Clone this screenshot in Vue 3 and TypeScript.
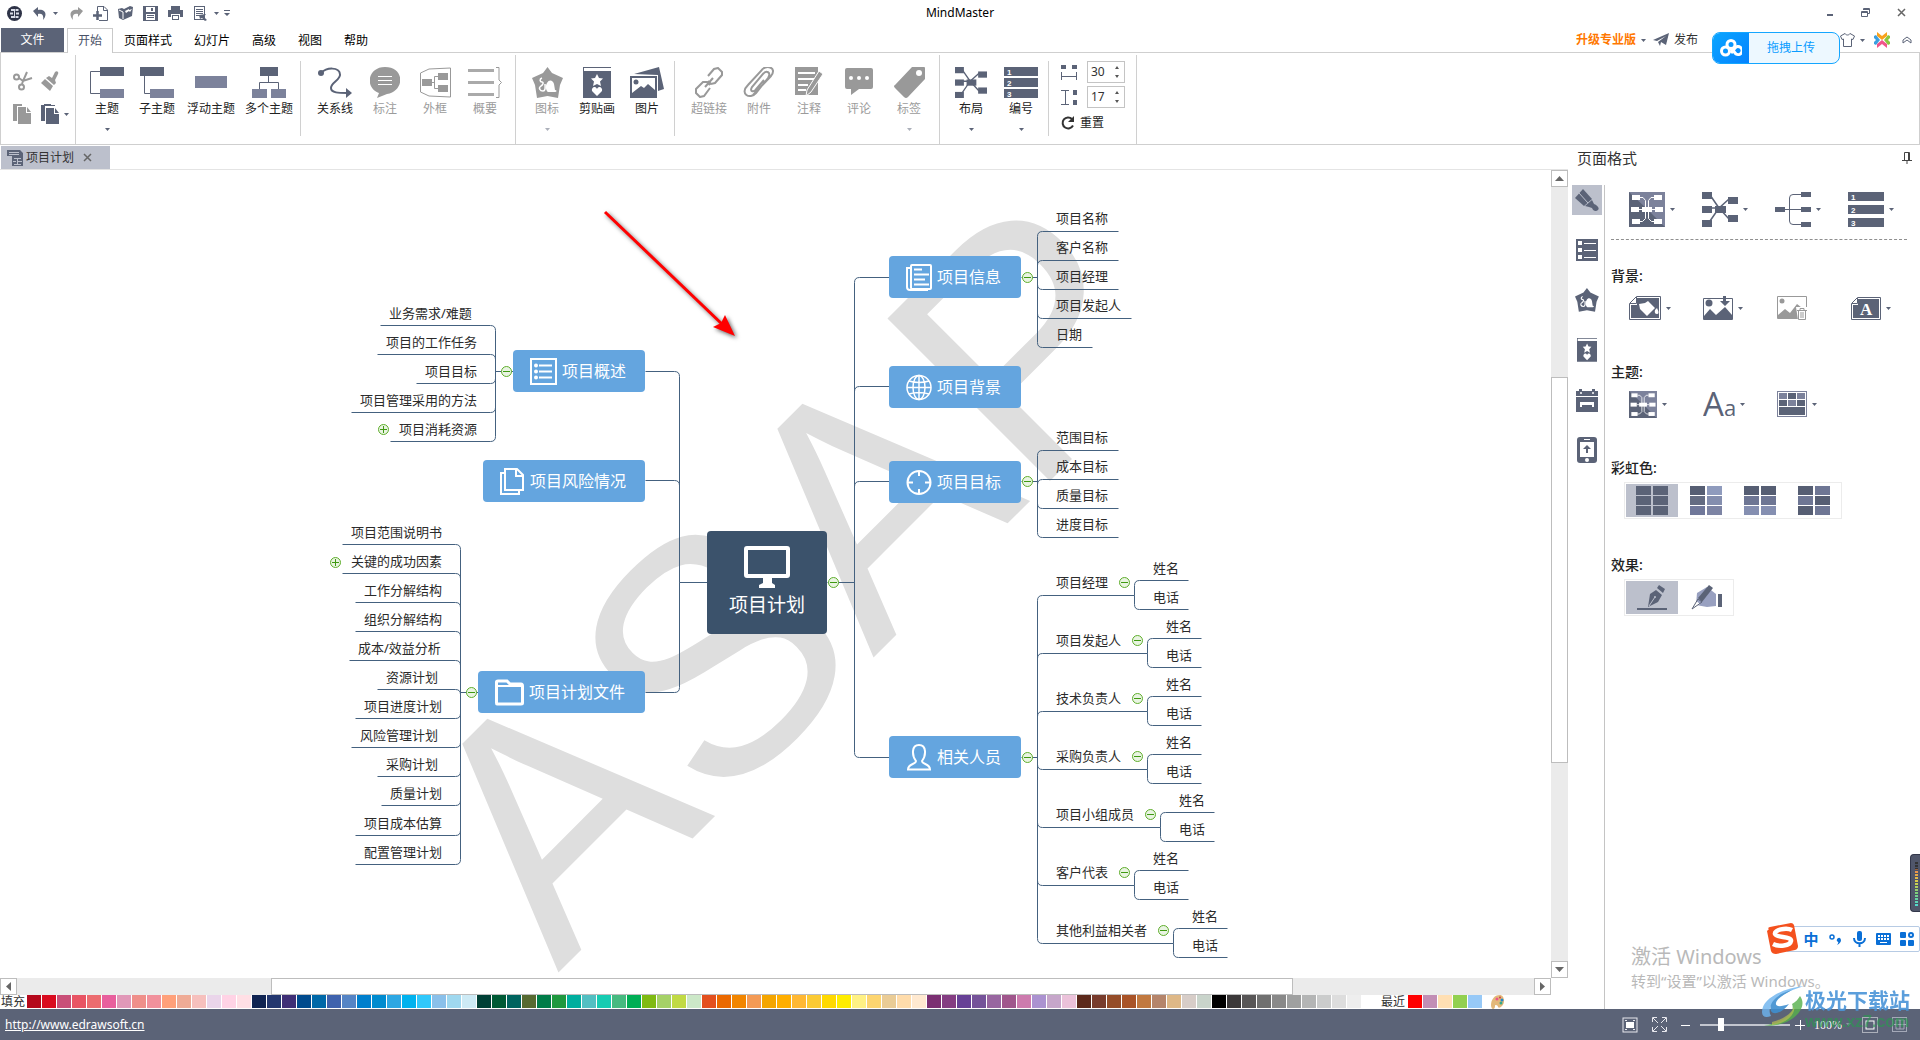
<script setup lang="ts">
import { h, ref } from 'vue'

type IconDef = [number, number, string]

const D = '#5b6377'
const M = '#7c829b'
const G = '#999999'

const star = (x: number, y: number) =>
  `<path fill="#fff" d="M${x} ${y - 6}l2 4 4 .5-3 3 1 4.500-4-2-4 2 1-4.500-3-3 4-.5z"/>`
const heart = (x: number, y: number) =>
  `<path fill="#fff" d="M${x} ${y + 5}l-5-5c-1-3 3-6 5-2 2-4 6-1 5 2z"/>`
const bars = (w: number, step: number, bh: number) =>
  [0, 1, 2]
    .map(
      (i) =>
        `<rect y="${i * step}" width="${w}" height="${bh}" fill="${D}"/><text x="3" y="${i * step + bh - 1}" font-family="Liberation Sans, sans-serif" font-size="8" font-weight="700" fill="#fff">${i + 1}</text>`,
    )
    .join('')
const spread = `<g fill="${D}"><path stroke="${D}" stroke-width="1.500" d="M8 3L17 16L27 7M8 29L17 16L27 27M6 16H16" fill="none"/><rect width="10" height="7"/><rect y="14" width="10" height="7"/><rect y="28" width="10" height="7"/><rect x="13" y="14" width="11" height="7"/><rect x="26" y="5" width="10" height="7"/><rect x="26" y="23" width="10" height="7"/></g>`
const theme = `<rect width="36" height="35" fill="${D}"/><path d="M0 0H36V35L18 17Z" fill="${M}"/><g fill="#fff"><rect x="3" y="3" width="8" height="5"/><rect x="25" y="3" width="8" height="5"/><rect x="2" y="15" width="8" height="5"/><rect x="26" y="15" width="8" height="5"/><rect x="3" y="27" width="8" height="5"/><rect x="25" y="27" width="8" height="5"/><rect x="13" y="15" width="10" height="5"/></g><path stroke="#fff" fill="none" d="M11 5.500h3l2.500 3v18l-3 3h-3M25 5.500h-3l-2.500 3v18l3 3h3M10 17.500h16"/>`
const penta = (c: string) =>
  `<path fill="${c}" d="M15.500 0L20 6L31 11L28 18L26 31L15.500 29L5 31L3 18L0 11L11 6z"/><path fill="none" stroke="#fff" stroke-width="1.500" d="M10 11c-3 1-2 4 0 4s1 3-1 4c-3 2-1 5 2 5s2-5 2-7"/><path fill="#fff" d="M15 16c2-4 6-3 7 1l1 6c2 0 2 2 0 2h-7c-2-1-3-6-1-9z"/>`
const album = `<path fill="${D}" d="M0 0H28V1H1V4H28V31H0z"/>${star(14, 13)}${heart(14, 24)}`
const grid = (c: string[]) =>
  c.map((f, i) => `<rect x="${(i % 2) * 17}" y="${Math.floor(i / 2) * 10}" width="15" height="9" fill="${f}"/>`).join('')

const icons: Record<string, IconDef> = {
  logo: [15, 15, `<circle cx="7.500" cy="7.500" r="7.500" fill="#2e3347"/><path stroke="#d8dbe6" stroke-width="2" d="M4 4h3M8.500 4h3M3 7.500h3M9 7.500h3M4 11h3M8.500 11h3"/><path stroke="#d8dbe6" d="M7.500 3v9"/>`],
  undo: [14, 13, `<path fill="${D}" d="M0 4L5 0V3C12 2 15 7 10 13C11 8 9 6 5 7V10z"/>`],
  redo: [14, 13, `<path fill="#999" d="M14 4L9 0V3C2 2 -1 7 4 13C3 8 5 6 9 7V10z"/>`],
  fresh: [15, 15, `<path fill="none" stroke="${D}" d="M4.500 6V.5H11L14.500 4V14.500H6M10.500 1V4.500H14"/><path stroke="${D}" stroke-width="2.500" d="M0 9.500h9M4.500 5v9"/>`],
  folder: [15, 14, `<path fill="${D}" d="M0 3l4-1 2 1 6-3 3 1-1 9-9 4-4-2z"/><path fill="none" stroke="#fff" d="M1 4l4 2v7"/><path fill="#fff" d="M7 5l4-2v1l3-1-2 3-1-1-3 2z"/>`],
  save: [15, 15, `<path fill="${D}" d="M0 0H15V15H0z"/><rect x="3" y="1" width="9" height="5" fill="#fff"/><rect x="8" y="2" width="2" height="3" fill="${D}"/><rect x="3" y="8" width="9" height="6" fill="#fff"/><path stroke="${D}" d="M4 9.500h7M4 11.500h7"/>`],
  print: [15, 14, `<path fill="${D}" d="M3 0h9v4H3zM0 4h15v7h-3V8H3v3H0zM4 9h7v5H4z"/><rect x="5" y="10" width="5" height="3" fill="#fff"/>`],
  preview: [13, 15, `<rect x=".5" y=".5" width="10" height="13" fill="none" stroke="${D}"/><path stroke="${D}" d="M2 3.500h7M2 5.500h7M2 7.500h7M2 9.500h4"/><path fill="${D}" d="M5 9l7-1-2 3 3 3-2 1-3-3-2 1z"/>`],
  more: [6, 7, `<path fill="${D}" d="M0 0h6v1H0zM0 3h6L3 6z"/>`],
  caret: [5, 3, `<path fill="${D}" d="M0 0h5L2.500 3z"/>`],
  min: [9, 9, `<path stroke="${D}" stroke-width="2" d="M2 7h6"/>`],
  restore: [9, 9, `<path fill="none" stroke="${D}" d="M2.500 2V.5H8.500V5.500H7M.5 3.500H6.500V8.500H.5zM.5 4.500h6M2 1.500h6"/>`],
  close: [9, 9, `<path stroke="#666" stroke-width="1.500" d="M1 1l7 7M8 1L1 8"/>`],
  plane: [17, 14, `<path fill="${D}" d="M0 7L16 0L13 12L8 9L7 13L5 9L13 3L4 8z"/>`],
  shirt: [15, 14, `<path fill="none" stroke="${D}" d="M5 .5L.5 3L2 6.500L3.500 6V13.500H11.500V6L13 6.500L14.500 3L10 .5C9 2.500 6 2.500 5 .5z"/>`],
  cross: [16, 16, `<path fill="#f9a11b" d="M3 0l5 4 5-4v4L8 8 3 4z"/><path fill="#8cc63f" d="M16 4v2l-2 2 2 2v2l-2 1-4-5 4-5z"/><path fill="#f0558a" d="M3 16l5-4 5 4v-4L8 8l-5 4z"/><path fill="#3b9fe0" d="M0 4v2l2 2-2 2v2l2 1 4-5-4-5z"/>`],
  chev: [10, 8, `<path fill="none" stroke="${D}" d="M1 7L1 4L5 1L9 4V7L5 4z"/>`],
  cloud: [22, 18, `<g fill="none" stroke="#fff" stroke-width="3"><circle cx="11" cy="5.500" r="4"/><circle cx="5.500" cy="12" r="4"/><path d="M11 9l5 6a4 4 0 1 0 -1-6l-4 5"/></g>`],
  cut: [20, 20, `<g fill="none" stroke="${G}" stroke-width="2"><circle cx="3.500" cy="6" r="2.500"/><circle cx="8.500" cy="16" r="2.500"/><path d="M6 7l4 3 9-3M9 13l1-3 4-9"/></g>`],
  brush: [18, 20, `<path fill="${G}" d="M14 1c2-2 4 0 3 2l-3 6 1 3-2 2-8-7 3-2 3 2zM4 8l8 7-3 5-9-8z"/>`],
  copy: [19, 20, `<path fill="${G}" d="M0 0h9v2H4v15H0zM5 3h8v6h5v11H5zM14 3l4 5h-4z"/>`],
  paste: [19, 20, `<path fill="${D}" d="M0 1h3V0h7v1h4v1H4v15H0zM5 4h8v6h5v10H5zM14 4l4 5h-4z"/>`],
  topic: [34, 31, `<path fill="none" stroke="${D}" d="M10 4.500H.5V26.500H10"/><rect x="10" width="24" height="9" fill="${D}"/><rect x="10" y="22" width="24" height="9" fill="${M}"/>`],
  sub: [34, 31, `<path fill="none" stroke="${D}" d="M4.500 9V26.500H10"/><rect width="24" height="9" fill="${D}"/><rect x="10" y="22" width="24" height="9" fill="${M}"/>`],
  float: [32, 31, `<rect y="9" width="32" height="12" fill="${M}"/>`],
  multi: [34, 31, `<path fill="none" stroke="${D}" d="M16.500 9V15.500M7.500 22V15.500H26.500V22"/><rect x="8" width="18" height="9" fill="${D}"/><rect y="22" width="15" height="9" fill="${M}"/><rect x="19" y="22" width="15" height="9" fill="${M}"/>`],
  relation: [34, 31, `<circle cx="3" cy="6" r="3" fill="${D}"/><path fill="none" stroke="${D}" stroke-width="2" d="M3 6C9 0 21 0 22 7C23 13 13 15 13 21C13 26 21 26 29 26"/><path fill="${D}" d="M28 21l6 5-6 5z"/>`],
  callout: [30, 31, `<path fill="${G}" d="M15 0C35 0 35 24 17 27L7 31L9 26C-6 20 -2 0 15 0z"/><path stroke="#fff" d="M8 9.500h14M8 13.500h14M8 17.500h14"/>`],
  bound: [31, 31, `<path fill="none" stroke="${G}" d="M.5 6L9 2L30.500 1V30L9 29L.5 25z"/><g fill="${G}"><rect x="2" y="12" width="10" height="7"/><rect x="18" y="6" width="10" height="7"/><rect x="18" y="18" width="10" height="7"/></g><path fill="none" stroke="${G}" d="M12 15.500h3M18 9.500h-3.500v12H18"/>`],
  summary: [34, 31, `<path stroke="#aaa" stroke-width="3" d="M0 3.500h26M0 15.500h26M0 27.500h26"/><path fill="none" stroke="${G}" d="M28 .5H31V13L33.500 15.500L31 18V30.500H28"/>`],
  mark: [31, 31, penta(G)],
  album: [28, 31, album],
  picture: [34, 31, `<path fill="${D}" d="M4 7L29 0L34 22L28 24V8z"/><path fill="${D}" d="M0 9h27v22H0z"/><path fill="#fff" d="M2 11h23v12l-7-6-4 4-3-2-9 7z"/><circle cx="6" cy="15" r="2.500" fill="${D}"/>`],
  link: [30, 31, `<g fill="none" stroke="${G}" stroke-width="2"><path d="M14 9l6-7 4-1 4 4v3l-7 8-4 1-3-3M16 21l-6 8-4 1-4-4v-4l7-7h4l3 3"/><path d="M11 20l8-9"/></g>`],
  clip: [32, 31, `<path fill="none" stroke="${G}" stroke-width="2" d="M10 28L28 9C35 0 22-3 18 4L5 18C-4 27 7 33 13 26L25 11C29 5 23 3 20 7L9 20C6 25 11 26 14 21L21 13"/>`],
  note: [30, 31, `<path fill="${G}" d="M1 0H24V28H1z"/><path stroke="#fff" stroke-width="2" d="M4 6h17M4 12h17M4 18h10M4 23h8"/><path fill="${G}" stroke="#fff" d="M25 4l4 3-12 18-5 4 1-6z"/>`],
  comment: [28, 31, `<path fill="${G}" d="M2 1H26Q28 1 28 3V20Q28 22 26 22H14L6 28V22H2Q0 22 0 20V3Q0 1 2 1z"/><g fill="#fff"><circle cx="6" cy="11" r="2"/><circle cx="14" cy="11" r="2"/><circle cx="22" cy="11" r="2"/></g>`],
  tag: [31, 31, `<path fill="${G}" d="M18 0H30Q31 0 31 1V12L14 30Q12 32 10 30L1 21Q-1 19 1 18z"/><circle cx="25" cy="6" r="3" fill="#fff"/>`],
  layout: [32, 31, `<g transform="scale(.89)">${spread}</g>`],
  number: [34, 31, bars(34, 11, 9)],
  gapH: [16, 15, `<path fill="${D}" d="M0 0h5v4H0zM11 0h5v4h-5z"/><path fill="none" stroke="${D}" d="M.5 7v8M15.500 7v8M1 11.500h14"/>`],
  gapV: [16, 15, `<path fill="${D}" d="M12 0h4v5h-4zM12 10h4v5h-4z"/><path fill="none" stroke="${D}" d="M0 .5h8M4.500 1v13M0 14.500h8"/>`],
  reset: [14, 14, `<path fill="none" stroke="#333" stroke-width="2" d="M12 9.500A5.500 5.500 0 1 1 11 3"/><path fill="#333" d="M13 0v6H7z"/>`],
  doc: [16, 16, `<path fill="${D}" d="M0 0h13l3 3v13H5V6H0z"/><path stroke="#bcc0cc" d="M2 2.500h10M2 4.500h10M7 8.500h3M11 8.500h3M6 11.500h3M11 11.500h4M7 14.500h3M11 14.500h3M10.500 8v7"/>`],
  pin: [10, 12, `<path fill="none" stroke="#444" d="M2.500 8V.5H7.500V8M0 8.500h10M5 9v3"/><path stroke="#444" d="M6.500 1v7"/>`],
  paint: [24, 23, `<path fill="${D}" d="M0 9L8 0L17 10L9 17z"/><path fill="${D}" d="M10 17L17 11L19 15C22 16 25 19 23 21S18 22 17 19L14 18z"/><path stroke="#bcc0cc" d="M4 4l9 10"/>`],
  list: [22, 22, `<rect width="22" height="22" fill="${D}"/><g fill="#fff"><rect x="2" y="2" width="4" height="4"/><rect x="2" y="9" width="4" height="4"/><rect x="2" y="16" width="4" height="4"/><rect x="8" y="4" width="12" height="1"/><rect x="8" y="11" width="12" height="1"/><rect x="8" y="18" width="12" height="1"/></g>`],
  mark2: [24, 24, `<g transform="scale(.77)">${penta(D)}</g>`],
  album2: [20, 24, `<g transform="scale(.72 .77)">${album}</g>`],
  calendar: [22, 23, `<path fill="${D}" d="M0 2h22v5H0zM0 8h22v15H0zM3 0h3v3H3zM16 0h3v3h-3z"/><circle cx="5" cy="4" r="1" fill="#fff"/><circle cx="17" cy="4" r="1" fill="#fff"/><path fill="#fff" d="M4 13h14v5h-2v-2H6v2H4z"/>`],
  phone: [20, 26, `<rect width="20" height="26" rx="3" fill="${D}"/><rect x="3" y="5" width="14" height="15" fill="#fff"/><circle cx="10" cy="23" r="2" fill="#fff"/><path stroke="#fff" d="M7 2.500h6"/><path fill="${D}" d="M10 8l4 4h-3v4H9v-4H6z"/>`],
  theme: [36, 35, theme],
  theme2: [28, 27, `<g transform="scale(.78)">${theme}</g>`],
  spread: [36, 35, spread],
  branch: [36, 35, `<g fill="${D}"><rect y="15" width="10" height="5"/><rect x="26" width="10" height="5"/><rect x="26" y="15" width="10" height="5"/><rect x="26" y="30" width="10" height="5"/></g><path fill="none" stroke="${D}" d="M10 17.500H26M26 2.500H18Q14.500 2.500 14.500 6V29Q14.500 32.500 18 32.500H26"/>`],
  number2: [36, 35, bars(36, 13, 9)],
  bgFill: [32, 24, `<path fill="none" stroke="${D}" d="M7.500 .5H31.500V23.500H.5V7.500z"/><path fill="${D}" d="M8 2H30V22H2V9H8z"/><path fill="none" stroke="${D}" d="M7.500 1V7.500H1"/><path fill="#fff" d="M10 8l6-1 3-2 7 7-8 8-7-7zM28 12q3 6 0 6t-2-4z"/>`],
  bgPic: [30, 24, `<path fill="none" stroke="${D}" d="M.5 2.500H29.500V23.500H.5z"/><path fill="${D}" d="M1 23V20L7 13L13 19L22 11L29 19V23z"/><circle cx="6" cy="7" r="3.500" fill="${D}"/><path fill="${D}" d="M20 0h3v5h4l-5 5-5-5h3z"/>`],
  bgDel: [30, 24, `<path fill="none" stroke="${G}" d="M.5 .5H29.500V22.500H.5z"/><path fill="${G}" d="M1 22V19L8 13L13 17L20 8L29 15V22z"/><circle cx="5" cy="5" r="2.500" fill="${G}"/><path fill="#fff" d="M19 11h11v13H21z"/><path fill="none" stroke="${G}" d="M20 14.500h10M23 14v-1.500h4V14M21.500 15v8.500h7V15M24 16v6M26 16v6"/>`],
  bgText: [30, 23, `<path fill="none" stroke="${D}" d="M6.500 .5H29.500V22.500H.5V6.500z"/><path fill="${D}" d="M7 2H28V21H2V8H7z"/><path fill="none" stroke="${D}" d="M6.500 1V6.500H1"/><text x="9" y="18" font-family="Liberation Serif, serif" font-weight="700" font-size="17" fill="#fff">A</text>`],
  fonts: [32, 28, `<text x="0" y="26" font-family="Open Sans, sans-serif" font-size="33" fill="${D}">A<tspan font-size="22">a</tspan></text>`],
  table: [30, 26, `<rect x=".5" y=".5" width="29" height="25" fill="none" stroke="${M}"/><g fill="${M}"><rect x="2" y="2" width="8" height="6"/><rect x="20" y="2" width="8" height="6"/><rect x="11" y="9" width="8" height="6"/></g><g fill="${D}"><rect x="11" y="2" width="8" height="6"/><rect x="2" y="9" width="8" height="6"/><rect x="20" y="9" width="8" height="6"/><rect x="2" y="16" width="26" height="8"/></g>`],
  rain1: [32, 29, grid([D, D, D, D, D, D])],
  rain2: [32, 29, grid(['#565e73', '#8f9bbd', '#646c82', '#848eae', '#70789a', '#7d84a4'])],
  rain3: [32, 29, grid(['#565e73', '#565e73', '#6e7694', '#6e7694', '#858fb1', '#858fb1'])],
  rain4: [32, 29, grid(['#565e73', '#6e7694', '#6e7694', '#565e73', '#565e73', '#6e7694'])],
  pen: [30, 25, `<path stroke="${D}" stroke-width="2" d="M0 24h30"/><path fill="${D}" d="M11 22L13 9L19 5L25 10L21 17zM20 3L22 0L28 4L26 8z"/><path stroke="#bcc0cc" d="M12 21L18 12"/><circle cx="18" cy="12" r="1" fill="#bcc0cc"/>`],
  hand: [31, 25, `<path fill="#98a0c0" d="M5 20L6 8L16 2L25 9V21L16 22z"/><path fill="#fff" d="M1 24L4 15L9 19z"/><path fill="${D}" d="M7 13L18 0L22 3L11 17z"/><path stroke="${D}" fill="none" d="M1 24L7 14L11 17L1 24"/><rect x="27" y="9" width="4" height="13" fill="${D}"/>`],
  nInfo: [26, 27, `<g fill="none" stroke="#fff" stroke-width="2"><rect x="5" y="1" width="20" height="24" rx="1"/><path d="M5 4H1V23Q1 26 4 26H22M8 5.500h8M8 10.500h15M8 15.500h11M8 20.500h15"/></g>`],
  nGlobe: [26, 27, `<g fill="none" stroke="#fff" stroke-width="1.500"><circle cx="13" cy="13.500" r="12"/><ellipse cx="13" cy="13.500" rx="6" ry="12"/><path d="M13 1V26M1 13.500H25M3 7Q13 10 23 7M3 20Q13 17 23 20"/></g>`],
  nTarget: [26, 27, `<circle cx="13" cy="13.500" r="11.500" fill="none" stroke="#fff" stroke-width="2"/><path stroke="#fff" stroke-width="2" d="M13 2V7M13 20V25M2 13.500H7M19 13.500H24"/>`],
  nUser: [26, 27, `<path fill="none" stroke="#fff" stroke-width="2" d="M10 17C6 12 5 1 13 1S20 12 16 17C16 21 24 19 24 25.500H2C2 19 10 21 10 17z"/>`],
  nList: [27, 27, `<rect x="1" y="1" width="25" height="25" fill="none" stroke="#fff" stroke-width="2"/><path stroke="#fff" stroke-width="2" d="M9 7.500h13M9 13.500h13M9 19.500h13"/><g fill="#fff"><circle cx="6" cy="7.500" r="2"/><circle cx="6" cy="13.500" r="2"/><circle cx="6" cy="19.500" r="2"/></g>`],
  nDocs: [25, 27, `<g fill="none" stroke="#fff" stroke-width="2"><path d="M5 1H17L23 7V22H5zM16 1V8H23M5 5H1V26H19V22"/></g>`],
  nFolder: [29, 27, `<path fill="none" stroke="#fff" stroke-width="3" d="M2 25Q1.500 25 1.500 24V3Q1.500 2 3 2H12L15 5H26Q27.500 5 27.500 7V24Q27.500 25 26 25z"/><path stroke="#fff" stroke-width="2" d="M2 7h25"/>`],
  monitor: [46, 42, `<rect x="2" y="2" width="42" height="28" rx="1" fill="none" stroke="#fff" stroke-width="4"/><path fill="#fff" d="M19 32h9v5l3 2v3H15v-3l4-2z"/>`],
  palette: [14, 14, `<path fill="#e3b87a" d="M9 0C3 0 0 5 0 10c0 5 4 5 4 1 0-2 3-1 3 1 1 2 6-1 6-6 0-4-2-6-4-6z"/><circle cx="6" cy="4" r="1.500" fill="#e58"/><circle cx="9" cy="2.500" r="1" fill="#c44"/><circle cx="11" cy="5" r="1.500" fill="#28c"/><circle cx="10" cy="8" r="1.500" fill="#3a8"/>`],
  fit: [16, 16, `<rect x="1" y="1" width="14" height="14" fill="none" stroke="#e8e8ee"/><rect x="4" y="5" width="8" height="6" fill="#fff"/><path stroke="#e8e8ee" d="M3 3.500h2M11 3.500h2M3 12.500h2M11 12.500h2"/>`],
  full: [15, 15, `<path fill="none" stroke="#e8e8ee" d="M.5 5V.5H5M10 .5h4.500V5M.5 10v4.500H5M10 14.500h4.500V10M1 1l5 5M14 1L9 6M1 14l5-5M14 14L9 9"/>`],
  minus: [10, 10, `<path stroke="#fff" d="M0 5.500h9"/>`],
  plus: [10, 10, `<path stroke="#fff" d="M0 5.500h10M5.500 0v10"/>`],
  caretW: [5, 3, `<path fill="#8d94a5" d="M0 0h5L2.500 3z"/>`],
  page: [16, 16, `<rect x=".5" y=".5" width="15" height="15" fill="none" stroke="#fff" stroke-dasharray="1 1"/><rect x="4" y="4" width="8" height="8" fill="none" stroke="#fff"/>`],
  pages: [16, 16, `<rect x=".5" y=".5" width="14" height="14" fill="none" stroke="#a4a9b8"/><path fill="none" stroke="#a4a9b8" d="M4 3h8v9H4zM8 3v9M2 7.500h12"/>`],
  sogou: [32, 32, `<path fill="#f4511e" d="M3 6Q1 5 4 4L25 0Q27 0 28 2L32 23Q32 26 29 27L10 31Q6 31 5 28L1 8z"/><path fill="none" stroke="#fff" stroke-width="4.500" d="M26 7C20 4 8 7 9 11S26 13 25 18 13 24 7 21"/>`],
  comma: [13, 12, `<circle cx="3" cy="4" r="2" fill="none" stroke="#0a6fd6" stroke-width="1.500"/><path fill="#0a6fd6" d="M8 6q3-3 4 1 0 3-4 5 2-3 1-3-2-1-1-3z"/>`],
  mic: [13, 16, `<rect x="4" width="5" height="10" rx="2" fill="#0a6fd6"/><path fill="none" stroke="#0a6fd6" stroke-width="2" d="M1 7C1 14 12 14 12 7M6.500 12v4"/>`],
  keys: [15, 12, `<rect width="15" height="12" rx="1" fill="#0a6fd6"/><path stroke="#fff" stroke-width="2" stroke-dasharray="2 1" d="M2 3h11M2 6h11"/><path stroke="#fff" d="M4 9.500h7"/>`],
  apps: [14, 14, `<g fill="#0a6fd6"><rect width="6" height="6" rx="1"/><rect y="8" width="6" height="6" rx="1"/><rect x="8" y="8" width="6" height="6" rx="1"/></g><circle cx="11" cy="3" r="2" fill="none" stroke="#0a6fd6" stroke-width="2"/>`],
  up: [9, 5, `<path fill="#666" d="M0 5h9L4.500 0z"/>`],
  down: [9, 5, `<path fill="#666" d="M0 0h9L4.500 5z"/>`],
  left: [5, 9, `<path fill="#666" d="M5 0v9L0 4.500z"/>`],
  right: [5, 9, `<path fill="#666" d="M0 0v9L5 4.500z"/>`],
  swirl: [44, 40, `<path fill="#6db4ee" fill-opacity=".9" d="M42 0C22 2 0 12 0 26c0 5 4 6 9 4C2 18 22 6 42 0z"/><path fill="#3f8fd0" d="M30 4C14 8 6 18 9 25c3 5 12 1 18-7-8 3-14 3-13-1 1-5 9-9 16-13z"/><path fill="#56b04c" fill-opacity=".9" d="M38 10c8 10-4 26-24 29-4 1-8 1-12 0 18-1 32-12 28-21 4-2 6-5 8-8z"/><path fill="#c3c84e" fill-opacity=".7" d="M10 36c12-3 20-9 22-15 2 7-8 17-22 18z"/>`],
}

const Icon = (p: { n: string }) => {
  const [w, ht, body] = icons[p.n]
  return h('svg', { width: w, height: ht, viewBox: `0 0 ${w} ${ht}`, 'aria-hidden': 'true', innerHTML: body })
}
Icon.props = ['n']

interface Tool { t: string; i: string; off?: boolean; menu?: boolean; wide?: boolean }
const groups: { end: string; tools: Tool[] }[] = [
  { end: 'short', tools: [
    { t: '主题', i: 'topic', menu: true }, { t: '子主题', i: 'sub' },
    { t: '浮动主题', i: 'float', wide: true }, { t: '多个主题', i: 'multi', wide: true }] },
  { end: 'long', tools: [
    { t: '关系线', i: 'relation' }, { t: '标注', i: 'callout', off: true },
    { t: '外框', i: 'bound', off: true }, { t: '概要', i: 'summary', off: true }] },
  { end: 'short', tools: [
    { t: '图标', i: 'mark', off: true, menu: true }, { t: '剪贴画', i: 'album' }, { t: '图片', i: 'picture' }] },
  { end: 'long', tools: [
    { t: '超链接', i: 'link', off: true }, { t: '附件', i: 'clip', off: true }, { t: '注释', i: 'note', off: true },
    { t: '评论', i: 'comment', off: true }, { t: '标签', i: 'tag', off: true, menu: true }] },
  { end: 'short', tools: [{ t: '布局', i: 'layout', menu: true }, { t: '编号', i: 'number', menu: true }] },
]
const tabs = ['开始', '页面样式', '幻灯片', '高级', '视图', '帮助']
const sideTabs = ['paint', 'list', 'mark2', 'album2', 'calendar', 'phone']
const gapX = ref(30)
const gapY = ref(17)
const zoom = ref(22)

const swatches = (
  'b5081b d90b1f c94f78 e85464 ec6c70 e85f9d e198b8 ef8f8a f1919c ffa07a efab96 f6c0bd ead5ea ffd3e5 ffdfe5 ' +
  '102452 23376f 3f2f76 004a8d 0068a8 3f62ad 5584c5 007fcd 008bcf 2da7e3 00b2ee 30c8fb 8ac0ea 9fd8ef cdeaf5 ' +
  '004036 005a35 00645f 576a31 007c48 1f983f 00ae9e 52bfc2 17ccb2 46ba80 00ae55 7fba12 a5d167 c1da44 cce8c8 ' +
  'e3501f eb6900 f18500 f39a55 f4a500 ffae00 ffb833 fbca34 ffd900 ffed00 fff184 fdd570 eacc96 ffdcab ffe9d0 ' +
  '7b2f72 843d82 674196 755399 9866a0 a0568c cd7bae ab92d0 c6a6ca ebc2da 5c291b 783c2d 954d29 a95428 c17940 ' +
  'b5856b deb887 d7cdc8 c9d4cb 000000 3b3839 585657 707070 898989 9fa0a0 b4b5b5 cbcccc dddddd eeeeee'
).split(' ')
const recent = ['ff0000', 'c28eb5', 'ffdfb3', '92d050', '97c9f7']

/* Mind map, in canvas coordinates. */
interface Box { t: string; i: string; x: number; y: number; w: number }
const boxes: Box[] = [
  { t: '项目信息', i: 'nInfo', x: 889, y: 86, w: 132 },
  { t: '项目背景', i: 'nGlobe', x: 889, y: 196, w: 132 },
  { t: '项目目标', i: 'nTarget', x: 889, y: 291, w: 132 },
  { t: '相关人员', i: 'nUser', x: 889, y: 566, w: 132 },
  { t: '项目概述', i: 'nList', x: 513, y: 180, w: 132 },
  { t: '项目风险情况', i: 'nDocs', x: 483, y: 290, w: 162 },
  { t: '项目计划文件', i: 'nFolder', x: 478, y: 501, w: 167 },
]
interface Leaf { t: string; x: number; y: number }
const leaves: Leaf[] = []
const paths: string[] = []
const toggles: { x: number; y: number; plus: boolean }[] = []

function arm(spine: number, from: number, y: number, end: number) {
  const dx = end > spine ? 5 : -5
  const dy = y < from ? 5 : -5
  paths.push(`M${spine} ${from}V${y + dy}Q${spine} ${y} ${spine + dx} ${y}H${end}`)
}

const leftLists: [number, number, [string, number, number][]][] = [
  [495, 201, [['业务需求/难题', 380, 155], ['项目的工作任务', 377, 184], ['项目目标', 416, 213], ['项目管理采用的方法', 351, 242], ['项目消耗资源', 390, 271]]],
  [460, 522, [['项目范围说明书', 342, 374], ['关键的成功因素', 342, 403], ['工作分解结构', 355, 432], ['组织分解结构', 355, 461],
    ['成本/效益分析', 349, 490], ['资源计划', 377, 519], ['项目进度计划', 355, 548], ['风险管理计划', 351, 577],
    ['采购计划', 377, 606], ['质量计划', 381, 635], ['项目成本估算', 355, 665], ['配置管理计划', 355, 694]]],
]
for (const [spine, mid, items] of leftLists) {
  for (const [t, x, y] of items) {
    leaves.push({ t, x: x + 9, y })
    arm(spine, mid, y, x)
  }
  paths.push(`M${spine} ${mid}H${spine + 18}`)
  toggles.push({ x: spine + 11, y: mid, plus: false })
}
toggles.push({ x: 383, y: 259, plus: true }, { x: 335, y: 392, plus: true })

const rightLists: [number, [string, number, number][]][] = [
  [107, [['项目名称', 1118, 61], ['客户名称', 1118, 90], ['项目经理', 1118, 119], ['项目发起人', 1131, 148], ['日期', 1092, 177]]],
  [311, [['范围目标', 1118, 280], ['成本目标', 1118, 309], ['质量目标', 1118, 338], ['进度目标', 1118, 367]]],
  [587, [['项目经理', 1134, 425], ['项目发起人', 1147, 483], ['技术负责人', 1147, 541], ['采购负责人', 1147, 599],
    ['项目小组成员', 1160, 657], ['客户代表', 1134, 715], ['其他利益相关者', 1173, 773]]],
]
for (const [mid, items] of rightLists) {
  for (const [t, end, y] of items) {
    leaves.push({ t, x: 1056, y: y - 1 })
    arm(1037, mid, y, end)
    if (mid === 587) {
      arm(end, y, y - 15, end + 54)
      arm(end, y, y + 14, end + 54)
      leaves.push({ t: '姓名', x: end + 19, y: y - 15 }, { t: '电话', x: end + 19, y: y + 14 })
      toggles.push({ x: end - 10, y: y - 13, plus: false })
    }
  }
  paths.push(`M1021 ${mid}H1037`)
  toggles.push({ x: 1027, y: mid, plus: false })
}
for (const y of [107, 216, 311, 587]) arm(854, 412, y, 889)
for (const y of [201, 310, 522]) arm(679, 412, y, 645)
paths.push('M679 412H707', 'M827 412H854')
toggles.push({ x: 833, y: 412, plus: false })

const at = (x: number, y: number) => ({ left: x + 'px', top: y + 'px' })
</script>

<template>
  <div class="app">
    <header class="title">
      <div class="quick">
        <button aria-label="MindMaster"><Icon n="logo" /></button>
        <button aria-label="撤销"><Icon n="undo" /></button>
        <button class="drop" aria-label="撤销列表"><Icon n="caret" /></button>
        <button aria-label="重做"><Icon n="redo" /></button>
        <button aria-label="新建"><Icon n="fresh" /></button>
        <button aria-label="打开"><Icon n="folder" /></button>
        <button aria-label="保存"><Icon n="save" /></button>
        <button aria-label="打印"><Icon n="print" /></button>
        <button aria-label="预览"><Icon n="preview" /></button>
        <button class="drop" aria-label="预览选项"><Icon n="caret" /></button>
        <button class="drop" aria-label="更多"><Icon n="more" /></button>
      </div>
      <h1>MindMaster</h1>
      <div class="win">
        <button aria-label="最小化"><Icon n="min" /></button>
        <button aria-label="还原"><Icon n="restore" /></button>
        <button aria-label="关闭"><Icon n="close" /></button>
      </div>
    </header>

    <nav class="menu">
      <button class="file">文件</button>
      <button v-for="(t, i) in tabs" :key="t" class="tab" :class="{ on: i === 0 }">{{ t }}</button>
      <div class="account">
        <button class="upgrade">升级专业版 <Icon n="caret" /></button>
        <button class="publish"><Icon n="plane" />发布</button>
        <button class="shirt" aria-label="皮肤"><Icon n="shirt" /><Icon n="caret" /></button>
        <button class="plain" aria-label="应用"><Icon n="cross" /></button>
        <button class="plain" aria-label="折叠"><Icon n="chev" /></button>
      </div>
      <button class="upload"><span class="cloud"><Icon n="cloud" /></span><span class="drag">拖拽上传</span></button>
    </nav>

    <section class="ribbon">
      <div class="clipboard">
        <button aria-label="剪切"><Icon n="cut" /></button>
        <button aria-label="格式刷"><Icon n="brush" /></button>
        <button aria-label="复制"><Icon n="copy" /></button>
        <button aria-label="粘贴"><Icon n="paste" /><Icon n="caret" /></button>
      </div>
      <div v-for="(g, gi) in groups" :key="gi" class="group" :class="[g.end, 'g' + gi]">
        <button v-for="b in g.tools" :key="b.t" class="tool" :class="{ off: b.off, wide: b.wide }">
          <Icon :n="b.i" /><span>{{ b.t }}</span><Icon v-if="b.menu" n="caret" />
        </button>
      </div>
      <div class="spacing">
        <label><Icon n="gapH" /><span class="spin"><input v-model.number="gapX" type="text" aria-label="水平间距" /><i></i></span></label>
        <label><Icon n="gapV" /><span class="spin"><input v-model.number="gapY" type="text" aria-label="垂直间距" /><i></i></span></label>
        <button class="reset"><Icon n="reset" />重置</button>
      </div>
    </section>

    <main class="body">
      <div class="work">
        <div class="docs">
          <div class="doc"><Icon n="doc" /><span>项目计划</span><button aria-label="关闭文档"><Icon n="close" /></button></div>
        </div>
        <div class="view">
          <div class="canvas">
            <svg class="links">
              <text class="mark" transform="translate(558 803) rotate(-45)">ASAP</text>
              <g transform="translate(.5 .5)"><path v-for="(p, i) in paths" :key="i" :d="p" /></g>
            </svg>
            <div v-for="b in boxes" :key="b.t" class="box" :style="{ ...at(b.x, b.y), width: b.w + 'px' }">
              <Icon :n="b.i" /><span>{{ b.t }}</span>
            </div>
            <div class="root" :style="at(707, 361)"><Icon n="monitor" /><span>项目计划</span></div>
            <span v-for="(l, i) in leaves" :key="i" class="leaf" :style="at(l.x, l.y)">{{ l.t }}</span>
            <button v-for="(t, i) in toggles" :key="i" class="toggle" :class="{ plus: t.plus }" :style="at(t.x, t.y)" :aria-label="t.plus ? '展开' : '折叠'"></button>
            <svg class="arrow" width="160" height="150" viewBox="0 0 160 150" aria-hidden="true">
              <path class="shaft" d="M15 11L134 125" /><path d="M135 114L145 135L123 126L131 122z" />
            </svg>
          </div>
          <div class="vbar">
            <button aria-label="向上"><Icon n="up" /></button>
            <div class="track"><div class="thumb"></div></div>
            <button aria-label="向下"><Icon n="down" /></button>
          </div>
        </div>
        <div class="hbar">
          <button aria-label="向左"><Icon n="left" /></button>
          <div class="track"><div class="thumb"></div></div>
          <button aria-label="向右"><Icon n="right" /></button>
        </div>
        <div class="colors">
          <span class="fill">填充</span>
          <button v-for="(c, i) in swatches" :key="i" class="sw" :style="{ background: '#' + c }" :aria-label="'#' + c"></button>
          <span class="recent">最近</span>
          <button v-for="c in recent" :key="c" class="sw" :style="{ background: '#' + c }" :aria-label="'#' + c"></button>
          <button class="pick" aria-label="更多颜色"><Icon n="palette" /></button>
        </div>
      </div>

      <aside class="side">
        <div class="head"><h2>页面格式</h2><button aria-label="固定"><Icon n="pin" /></button></div>
        <div class="cols">
          <div class="rail">
            <button v-for="(s, i) in sideTabs" :key="s" :class="{ on: i === 0 }" :aria-label="s"><Icon :n="s" /></button>
          </div>
          <div class="panel">
            <div class="row first">
              <button v-for="n in ['theme', 'spread', 'branch', 'number2']" :key="n" :aria-label="n"><Icon :n="n" /><Icon n="caret" /></button>
            </div>
            <h3>背景:</h3>
            <div class="row">
              <button aria-label="背景颜色"><Icon n="bgFill" /><Icon n="caret" /></button>
              <button aria-label="背景图片"><Icon n="bgPic" /><Icon n="caret" /></button>
              <button aria-label="移除背景"><Icon n="bgDel" /></button>
              <button aria-label="水印"><Icon n="bgText" /><Icon n="caret" /></button>
            </div>
            <h3>主题:</h3>
            <div class="row">
              <button v-for="n in ['theme2', 'fonts', 'table']" :key="n" :aria-label="n"><Icon :n="n" /><Icon n="caret" /></button>
            </div>
            <h3>彩虹色:</h3>
            <div class="seg">
              <button v-for="n in 4" :key="n" :class="{ on: n === 1 }" :aria-label="'彩虹色 ' + n"><Icon :n="'rain' + n" /></button>
            </div>
            <h3>效果:</h3>
            <div class="seg">
              <button class="on" aria-label="普通"><Icon n="pen" /></button>
              <button aria-label="手绘"><Icon n="hand" /></button>
            </div>
          </div>
        </div>
      </aside>
    </main>

    <footer class="status">
      <a href="http://www.edrawsoft.cn">http://www.edrawsoft.cn</a>
      <div class="zoom">
        <button aria-label="适应"><Icon n="fit" /></button>
        <button aria-label="全屏"><Icon n="full" /></button>
        <button aria-label="缩小"><Icon n="minus" /></button>
        <input v-model.number="zoom" type="range" min="0" max="100" aria-label="缩放" />
        <button aria-label="放大"><Icon n="plus" /></button>
        <button class="pct">100% <Icon n="caretW" /></button>
        <button aria-label="单页"><Icon n="page" /></button>
        <button aria-label="整宽"><Icon n="pages" /></button>
      </div>
    </footer>

    <div class="activate"><p>激活 Windows</p><p>转到“设置”以激活 Windows。</p></div>
    <div class="meter"><i></i></div>
    <div class="ime">
      <span class="s"><Icon n="sogou" /></span><button>中</button>
      <button aria-label="标点"><Icon n="comma" /></button><button aria-label="语音"><Icon n="mic" /></button>
      <button aria-label="键盘"><Icon n="keys" /></button><button aria-label="工具"><Icon n="apps" /></button>
    </div>
    <div class="site"><Icon n="swirl" /><div><b>极光下载站</b><em>www.xz7.com</em></div></div>
  </div>
</template>

<style>
body { margin: 0; overflow: hidden; }
</style>

<style scoped>
.app { position: relative; display: flex; flex-direction: column; height: 100vh; background: #fff; color: #222; font: 12px/16px "Noto Sans", "Noto Sans CJK SC", sans-serif; overflow: hidden; }
.app * { box-sizing: border-box; }
button { display: flex; align-items: center; justify-content: center; padding: 0; border: 0; background: none; color: inherit; font: inherit; white-space: nowrap; }
h1, h2, h3, p { margin: 0; font-weight: 400; }
.app :deep(svg) { display: block; flex: none; }

.title { display: grid; grid-template-columns: 1fr auto 1fr; align-items: start; height: 28px; flex: none; }
.quick { display: flex; padding-left: 2px; }
.quick button { width: 25px; height: 26px; }
.quick .drop { width: 6px; margin-right: 5px; }
h1 { font-size: 12px; line-height: 26px; color: #000; }
.win { display: flex; justify-content: flex-end; padding-right: 1px; }
.win button { width: 36px; height: 24px; }

.menu { position: relative; display: flex; height: 24px; flex: none; color: #000; z-index: 2; }
.file { width: 63px; margin: 0 3px 0 1px; background: #5b6377; color: #fff; }
.tab { padding: 1px 11px 0; }
.tab.on { height: 25px; padding: 0 10px; border: 1px solid #c9c9c9; border-bottom: 0; background: #fff; color: #4a5268; }
.account { display: flex; margin-left: auto; padding-right: 8px; }
.upgrade { gap: 5px; color: #ff7800; font-weight: 700; }
.publish { gap: 4px; margin: 0 142px 0 7px; color: #333; }
.shirt { gap: 5px; margin-right: 3px; }
.plain { width: 27px; }
.plain + .plain { justify-content: flex-end; width: 17px; }
.upload { position: absolute; right: 80px; top: 4px; width: 128px; height: 32px; border: 1px solid #14a6ff; border-radius: 8px; background: #edf8ff; overflow: hidden; color: #0a9cff; }
.cloud { display: flex; align-items: center; justify-content: center; width: 36px; height: 32px; background: linear-gradient(135deg, #0aa6ff, #0582ff); }
.drag { flex: 1; padding-right: 6px; }

.ribbon { display: flex; height: 93px; flex: none; border: 1px solid #cfcfcf; }
.clipboard { display: grid; grid-template-columns: 20px 30px; gap: 13px 8px; align-content: start; width: 75px; padding: 16px 0 0 12px; margin-top: 2px; border-right: 1px solid #d0d0d0; }
.clipboard button { justify-content: flex-start; gap: 4px; height: 20px; }
.group { position: relative; display: flex; padding: 12px 6px 0; margin-top: 2px; }
.group::after { content: ""; position: absolute; right: 0; top: 0; bottom: 0; width: 1px; background: #d0d0d0; }
.group.short { padding-right: 3px; }
.group.long { padding-left: 9px; }
.group.short::after { top: 6px; bottom: 8px; }
.tool { flex-direction: column; justify-content: flex-start; width: 50px; height: 70px; }
.tool.wide { width: 58px; }
.tool span { margin: 3px 0 11px; }
.tool.off { color: #9b9b9b; }
.tool.off :deep(svg + span + svg), .tool.off span + :deep(svg) { opacity: .5; }
.spacing { display: flex; flex-direction: column; gap: 3px; width: 88px; margin-top: 2px; padding: 6px 0 0 12px; border-right: 1px solid #d0d0d0; }
.spacing label { display: flex; align-items: center; gap: 10px; }
.spin { position: relative; display: flex; width: 38px; height: 22px; border: 1px solid #c4c4c4; }
.spin input { width: 24px; padding: 0 0 0 3px; border: 0; font: inherit; font-size: 12px; color: #333; background: none; outline: 0; }
.spin i::before, .spin i::after { content: ""; position: absolute; right: 5px; border: 2px solid transparent; }
.spin i::before { top: 4px; border-bottom: 3px solid #555; border-top: 0; }
.spin i::after { bottom: 4px; border-top: 3px solid #555; border-bottom: 0; }
.reset { justify-content: flex-start; gap: 5px; height: 20px; color: #222; margin-top: 2px; }

.body { display: flex; flex: 1; min-height: 0; }
.work { display: flex; flex-direction: column; flex: 1; min-width: 0; }
.docs { height: 25px; flex: none; padding: 1px 0 0 1px; border-bottom: 1px solid #e4e4e4; }
.doc { display: flex; align-items: center; width: 109px; height: 23px; padding-left: 6px; background: #bcc0cc; color: #333; }
.doc span { margin: 0 9px 0 3px; }
.view { display: flex; flex: 1; min-height: 0; }
.canvas { position: relative; flex: 1; overflow: hidden; }
.links { position: absolute; left: 0; top: 0; width: 100%; height: 100%; }
.links path { fill: none; stroke: #44617f; }
.mark { font: 334px "Liberation Sans", sans-serif; fill: #dedede; }
.box { position: absolute; display: flex; align-items: center; gap: 5px; height: 42px; padding-left: 17px; border-radius: 4px; background: #64a5df; color: #fff; font-size: 16px; line-height: 24px; }
.root { position: absolute; display: flex; flex-direction: column; align-items: center; width: 120px; height: 103px; padding-top: 15px; border-radius: 4px; background: #3b526b; color: #fff; font-size: 19px; line-height: 34px; }
.leaf { position: absolute; margin-top: -23px; font-size: 13px; line-height: 22px; color: #2b2b2b; white-space: nowrap; }
.toggle { position: absolute; width: 11px; height: 11px; margin: -5px 0 0 -5px; border: 1px solid #5fae2c; border-radius: 50%; background: linear-gradient(#3f9a12, #3f9a12) center / 7px 1px no-repeat, #e9f4e2; }
.toggle.plus { background: linear-gradient(#3f9a12, #3f9a12) center / 7px 1px no-repeat, linear-gradient(#3f9a12, #3f9a12) center / 1px 7px no-repeat, #e9f4e2; }
.arrow { position: absolute; left: 590px; top: 31px; fill: #f00; filter: drop-shadow(2px 2px 2px #0009); }
.shaft { stroke: #f00; stroke-width: 3; }

.vbar, .hbar { display: flex; flex: none; background: #ebebeb; }
.vbar { flex-direction: column; width: 17px; }
.hbar { height: 17px; margin-right: 17px; }
.vbar button, .hbar button { flex: none; width: 17px; height: 17px; border: 1px solid #bdbdbd; background: #fff; }
.track { display: flex; flex: 1; }
.vbar .track { flex-direction: column; padding: 190px 0 198px; }
.hbar .track { padding: 0 241px 0 254px; }
.thumb { flex: 1; border: 1px solid #bdbdbd; background: #fff; }
.colors { display: flex; align-items: center; height: 14px; flex: none; color: #333; }
.fill { width: 27px; padding-left: 1px; }
.sw { width: 14px; height: 13px; margin-right: 1px; align-self: flex-start; }
.recent { width: 46px; padding-left: 19px; }
.pick { margin-left: 8px; }

.side { display: flex; flex-direction: column; width: 352px; flex: none; }
.head { display: flex; align-items: center; justify-content: space-between; height: 40px; padding: 0 8px 15px 9px; }
h2 { font-size: 15px; line-height: 24px; color: #333; }
.cols { display: flex; flex: 1; }
.rail { display: flex; flex: none; flex-direction: column; gap: 20px; width: 37px; padding-left: 4px; border-right: 1px solid #c4c4c4; }
.rail button { width: 30px; height: 30px; }
.on { background: #bcc0cc; }
.panel { flex: 1; min-width: 0; padding: 0 13px 0 6px; }
.row { display: grid; grid-template-columns: repeat(4, 74px); height: 64px; padding: 2px 0 0 18px; align-items: start; }
.row button { gap: 5px; justify-content: flex-start; height: 36px; }
.row.first { grid-template-columns: repeat(4, 73px); height: 55px; padding: 6px 0 0 18px; border-bottom: 1px dashed #8f8f8f; }
h3 { margin: 12px 0 4px; line-height: 16px; font-weight: 500; color: #222; }
.row.first + h3 { margin-top: 28px; }
.seg { display: flex; width: fit-content; height: 37px; margin: 6px 0 0 13px; border: 1px solid #ececec; padding: 1px; gap: 2px; }
.seg button { width: 52px; height: 33px; }
.seg + h3 { margin-top: 38px; }

.status { display: flex; align-items: center; justify-content: space-between; height: 31px; flex: none; padding: 0 12px 0 5px; background: #5b6377; color: #fff; }
.status a { color: #fff; }
.zoom { display: flex; align-items: center; }
.zoom button { height: 20px; margin-left: 14px; }
.zoom input { appearance: none; width: 90px; height: 14px; margin: 0 0 0 9px; background: linear-gradient(#c4c7d0, #c4c7d0) center / 100% 2px no-repeat; }
.zoom input::-webkit-slider-thumb { appearance: none; width: 6px; height: 13px; background: #fff; }
.zoom input + button { margin-left: 5px; }
.zoom .pct { gap: 4px; margin-left: 9px; font-family: "Liberation Serif", serif; }
.zoom .pct + button { margin-left: 11px; }

.activate { position: absolute; right: 95px; bottom: 47px; width: 194px; color: #b9b9b9; font-size: 15px; line-height: 24px; white-space: nowrap; }
.activate p:first-child { font-size: 20px; }
.meter { position: absolute; right: 0; bottom: 128px; width: 10px; height: 58px; padding: 7px 2px 6px 4px; border-radius: 4px 0 0 4px; background: #50566a; border: 1px solid #33374a; border-right: 0; }
.meter i { display: block; height: 44px; background: repeating-linear-gradient(#0000 0 2px, #4b5165 2px 3px), linear-gradient(#333 0 16%, #f08a4a 18%, #d8d048 45%, #7fd07a 70%, #4fd8d0); }
.ime { position: absolute; right: 0; bottom: 88px; display: flex; align-items: center; width: 154px; height: 26px; color: #0a6fd6; }
.ime::before { content: ""; position: absolute; inset: 0 0 0 20px; border: 1px solid #b7cbe4; border-radius: 2px; background: #fff; }
.ime .s, .ime button { position: relative; }
.ime button { width: 24px; font-size: 15px; font-weight: 700; }
.s { width: 33px; }
.site { position: absolute; right: 10px; bottom: 8px; display: flex; opacity: .9; }
.site > div { display: flex; flex-direction: column; margin-left: -1px; padding-top: 2px; }
.site b { color: #4a94d8; font-size: 21px; line-height: 24px; }
.site em { color: #2a9a50; font: 700 16px/20px "Liberation Sans", sans-serif; opacity: .7; }
</style>
